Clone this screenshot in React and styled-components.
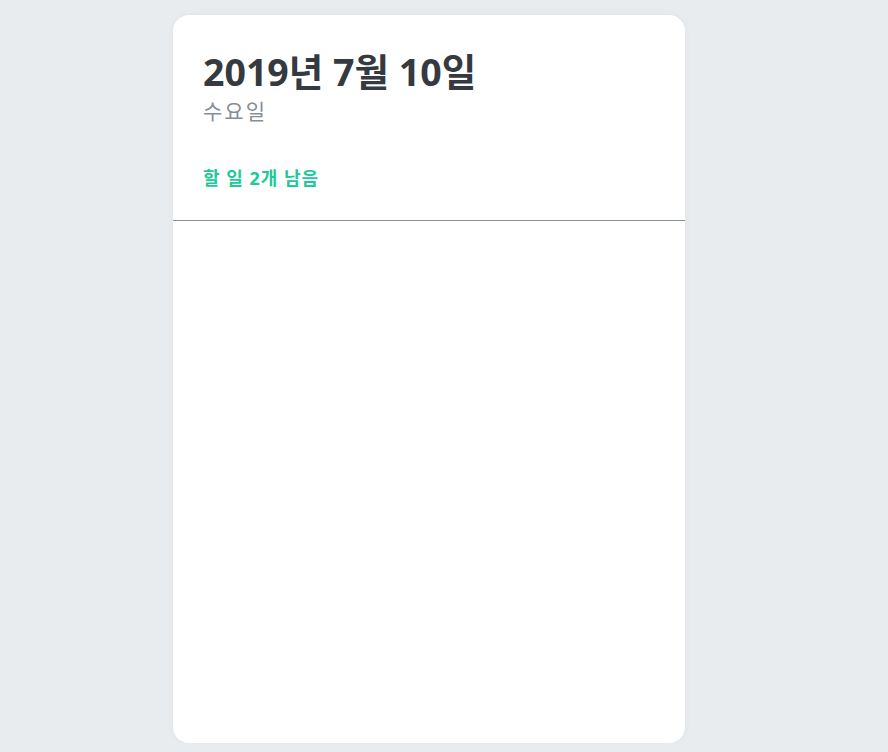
import React from "react";
import styled, { createGlobalStyle } from "styled-components";

const GlobalStyle = createGlobalStyle`
  html, body { margin: 0; padding: 0; }
  body {
    background: #e9ecef;
    font-family: "Noto Sans", "Noto Sans CJK KR", sans-serif;
  }
`;

const Page = styled.div`
  display: flex;
  justify-content: center;
  padding: 15px 30px 0 0;
`;

const Template = styled.div`
  width: 512px;
  height: 728px;
  background: #fff;
  border-radius: 16px;
  box-shadow: 0 0 8px rgba(0, 0, 0, 0.04);
  display: flex;
  flex-direction: column;
`;

const Head = styled.div`
  padding: 31px 32px 29px 30px;
  border-bottom: 1px solid #868e96;
`;

const Title = styled.h1`
  margin: 0;
  font-size: 37.5px;
  color: #343a40;
  font-weight: 700;
  line-height: 1.4;
`;

const Day = styled.div`
  margin-top: -2px;
  color: #868e96;
  font-size: 21px;
  letter-spacing: 2px;
  line-height: 1.4;
`;

const TasksLeft = styled.div`
  color: #20c997;
  font-size: 18px;
  margin-top: 40px;
  font-weight: 700;
  letter-spacing: 1px;
  line-height: 1.4;
`;

export default function App() {
  return (
    <>
      <GlobalStyle />
      <Page>
        <Template>
          <Head>
            <Title>2019년 7월 10일</Title>
            <Day>수요일</Day>
            <TasksLeft>할 일 2개 남음</TasksLeft>
          </Head>
        </Template>
      </Page>
    </>
  );
}
